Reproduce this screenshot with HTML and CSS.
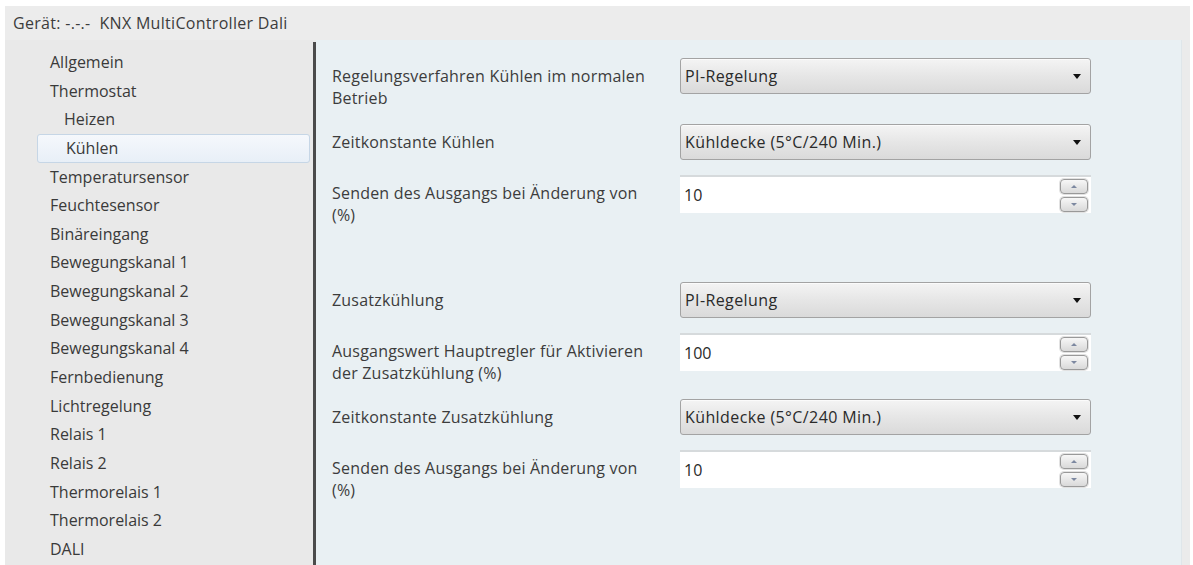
FILE: index.html
```html
<!DOCTYPE html>
<html lang="de">
<head>
<meta charset="utf-8">
<title>KNX MultiController Dali</title>
<link rel="stylesheet" href="styles.css">
</head>
<body>
<div class="window">
  <div class="titlebar">Gerät: -.-.-&nbsp; KNX MultiController Dali</div>
  <div class="main">
    <nav class="sidebar">
      <div class="item">Allgemein</div>
      <div class="item">Thermostat</div>
      <div class="item sub">Heizen</div>
      <div class="item sub selected">Kühlen</div>
      <div class="item">Temperatursensor</div>
      <div class="item">Feuchtesensor</div>
      <div class="item">Binäreingang</div>
      <div class="item">Bewegungskanal 1</div>
      <div class="item">Bewegungskanal 2</div>
      <div class="item">Bewegungskanal 3</div>
      <div class="item">Bewegungskanal 4</div>
      <div class="item">Fernbedienung</div>
      <div class="item">Lichtregelung</div>
      <div class="item">Relais 1</div>
      <div class="item">Relais 2</div>
      <div class="item">Thermorelais 1</div>
      <div class="item">Thermorelais 2</div>
      <div class="item">DALI</div>
    </nav>
    <div class="divider"></div>
    <section class="content">
      <div class="row">
        <div class="label">Regelungsverfahren Kühlen im normalen<br>Betrieb</div>
        <div class="select"><span>PI-Regelung</span><span class="arrow"></span></div>
      </div>
      <div class="row">
        <div class="label">Zeitkonstante Kühlen</div>
        <div class="select"><span>Kühldecke (5°C/240 Min.)</span><span class="arrow"></span></div>
      </div>
      <div class="row">
        <div class="label">Senden des Ausgangs bei Änderung von<br>(%)</div>
        <div class="spin"><span>10</span><div class="spinbtns"><span class="btn up"></span><span class="btn down"></span></div></div>
      </div>
      <div class="spacer"></div>
      <div class="row">
        <div class="label">Zusatzkühlung</div>
        <div class="select"><span>PI-Regelung</span><span class="arrow"></span></div>
      </div>
      <div class="row">
        <div class="label">Ausgangswert Hauptregler für Aktivieren<br>der Zusatzkühlung (%)</div>
        <div class="spin"><span>100</span><div class="spinbtns"><span class="btn up"></span><span class="btn down"></span></div></div>
      </div>
      <div class="row">
        <div class="label">Zeitkonstante Zusatzkühlung</div>
        <div class="select"><span>Kühldecke (5°C/240 Min.)</span><span class="arrow"></span></div>
      </div>
      <div class="row">
        <div class="label">Senden des Ausgangs bei Änderung von<br>(%)</div>
        <div class="spin"><span>10</span><div class="spinbtns"><span class="btn up"></span><span class="btn down"></span></div></div>
      </div>
    </section>
  </div>
</div>
</body>
</html>
```

FILE: styles.css
```css
html, body {
  margin: 0;
  padding: 0;
  background: #ffffff;
}
body {
  font-family: "Open Sans", "Noto Sans", sans-serif;
  color: #3a3a3a;
  width: 1193px;
  height: 565px;
  overflow: hidden;
}
.window {
  margin: 6px 3px 0 5px;
  height: 559px;
  display: flex;
  flex-direction: column;
  background: #ebebeb;
}
.titlebar {
  height: 34px;
  line-height: 34px;
  padding-left: 8px;
  font-size: 16px;
  letter-spacing: 0.3px;
  color: #3c3c3c;
  background: #ececec;
}
.main {
  flex: 1;
  display: flex;
  min-height: 0;
}
.sidebar {
  width: 308px;
  padding-top: 8px;
  background: #e9e9e9;
  font-size: 16px;
}
.item {
  height: 28.65px;
  line-height: 28.65px;
  padding-left: 45px;
  box-sizing: border-box;
  white-space: nowrap;
  color: #3a3a3a;
}
.item.sub {
  padding-left: 59px;
}
.item.selected {
  margin-left: 32px;
  margin-right: 3px;
  padding-left: 28px;
  border: 1px solid #c6d6e6;
  border-radius: 3px;
  background: linear-gradient(#f5f8fc, #e8eff7);
  line-height: 26.65px;
}
.divider {
  width: 3px;
  margin-top: 2px;
  background: #4b4b4b;
}
.content {
  flex: 1;
  background: #e9f0f3;
  margin-right: 8px;
  padding: 18px 0 0 16px;
  font-size: 16px;
  border-right: 1px solid #dfe6ea;
}
.row {
  display: grid;
  grid-template-columns: 348px 411px;
  align-items: start;
  margin-bottom: 15px;
}
.label {
  padding-top: 7px;
  line-height: 22px;
  letter-spacing: 0.2px;
  color: #3c3c3c;
  white-space: nowrap;
}
.spacer {
  height: 41px;
}
.select {
  height: 36px;
  box-sizing: border-box;
  border: 1px solid #a3a3a3;
  border-radius: 3px;
  background: linear-gradient(#f4f4f4, #e6e6e6 50%, #dadada);
  display: flex;
  align-items: center;
  justify-content: space-between;
  padding: 0 9px 0 4px;
  color: #2a2a2a;
  letter-spacing: 0.4px;
  box-shadow: inset 0 1px 0 #fbfbfb;
}
.arrow {
  width: 0;
  height: 0;
  border-left: 4px solid transparent;
  border-right: 4px solid transparent;
  border-top: 5px solid #111;
}
.spin {
  height: 38px;
  box-sizing: border-box;
  background: #ffffff;
  border-top: 2px solid #d6dadc;
  display: flex;
  align-items: center;
  justify-content: space-between;
  padding: 0 3px 0 4px;
  color: #2a2a2a;
}
.spinbtns {
  display: flex;
  flex-direction: column;
  gap: 3px;
}
.btn {
  width: 28px;
  height: 15px;
  box-sizing: border-box;
  border: 1px solid #999;
  border-radius: 4px;
  background: linear-gradient(#f7f7f7, #d9d9d9);
  box-shadow: 0 0 0 1px #e2e2e2;
  display: flex;
  align-items: center;
  justify-content: center;
}
.btn::after {
  content: "";
  width: 0;
  height: 0;
  border-left: 3px solid transparent;
  border-right: 3px solid transparent;
}
.btn.up::after {
  border-bottom: 3px solid #7d88a0;
}
.btn.down::after {
  border-top: 3px solid #7d88a0;
}
```
